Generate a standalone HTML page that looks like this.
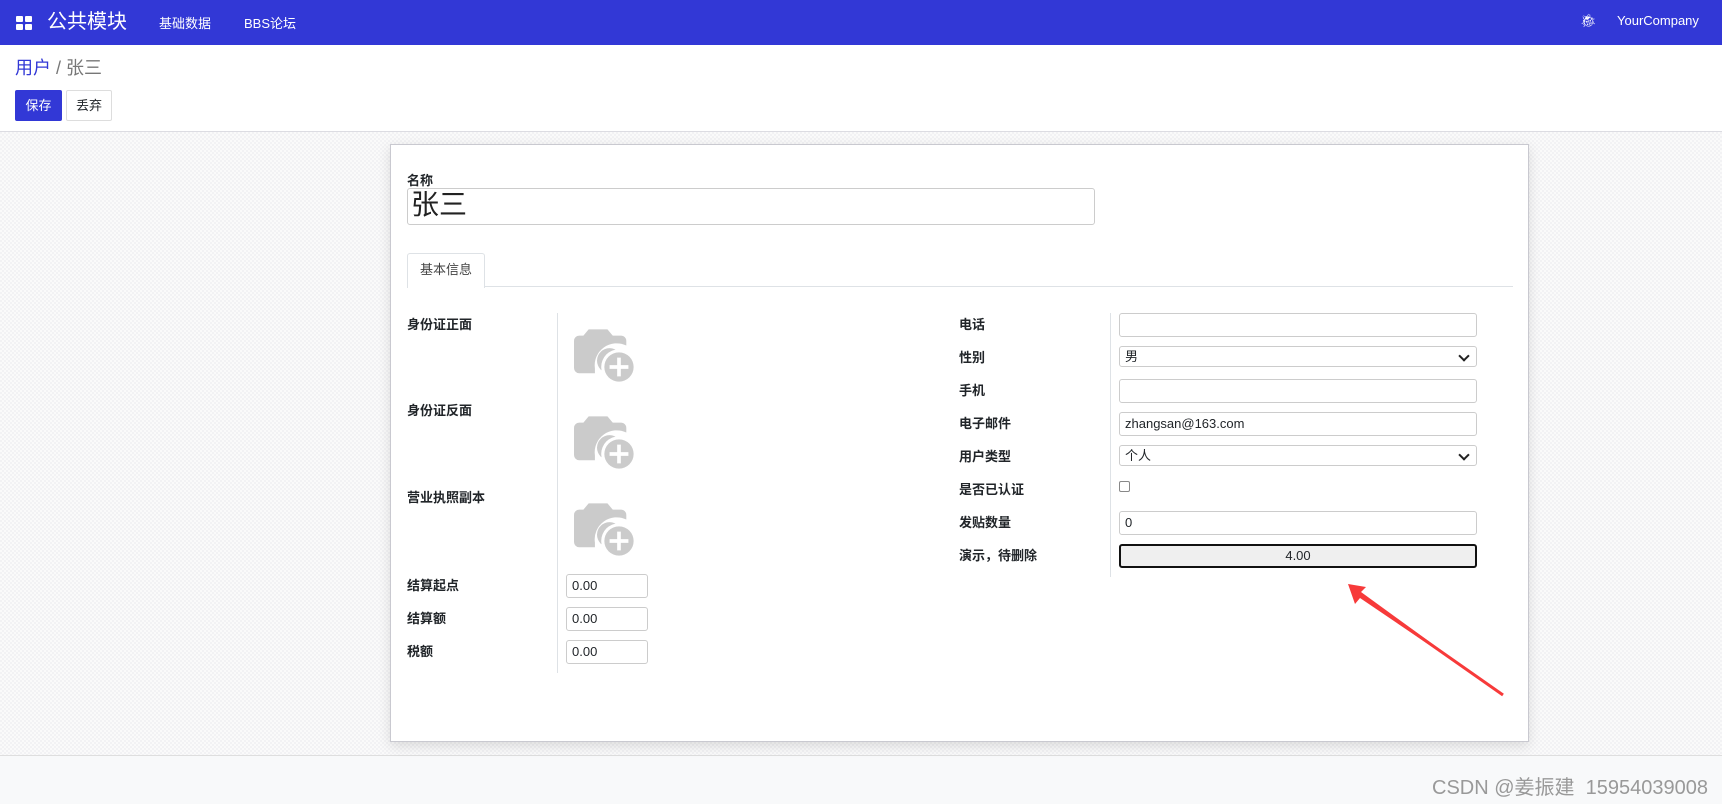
<!DOCTYPE html>
<html><head><meta charset="utf-8"><style>
*{box-sizing:border-box;margin:0;padding:0}
body{width:1722px;height:804px;overflow:hidden;position:relative;background:#fff;font-family:"Liberation Sans","Noto Sans CJK SC",sans-serif;font-size:13px;color:#212529}
.nav{position:absolute;left:0;top:0;width:1722px;height:45px;background:#3238d6;color:#fff}
.a{position:absolute}
.main{position:absolute;left:0;top:131px;width:1722px;height:624px;border-top:1px solid #dcdce2;background-color:#f2f2f4;background-image:linear-gradient(45deg,#fafafa 25%,transparent 25%,transparent 75%,#fafafa 75%),linear-gradient(45deg,#fafafa 25%,transparent 25%,transparent 75%,#fafafa 75%);background-size:4px 4px;background-position:0 0,2px 2px}
.foot{position:absolute;left:0;top:755px;width:1722px;height:49px;background:#f8f9fa;border-top:1px solid #dedede}
.sheet{position:absolute;left:390px;top:144px;width:1139px;height:598px;background:#fff;border:1px solid #c9c9d0;box-shadow:0 4px 12px rgba(0,0,0,.12)}
.lbl{position:absolute;font-weight:bold;font-size:13px;color:#212529}
.in{position:absolute;height:24px;border:1px solid #ccc;border-radius:3px;background:#fff;font-size:13px;padding:3px 5px;line-height:16px}
.sel::after{content:"";position:absolute;right:8px;top:5px;width:6px;height:6px;border-right:2px solid #222;border-bottom:2px solid #222;transform:rotate(45deg)}
</style></head><body>
<div class="nav">
 <div class="a" style="left:16px;top:16px;width:7px;height:6px;background:#fff;border-radius:1px"></div>
 <div class="a" style="left:25px;top:16px;width:7px;height:6px;background:#fff;border-radius:1px"></div>
 <div class="a" style="left:16px;top:24px;width:7px;height:6px;background:#fff;border-radius:1px"></div>
 <div class="a" style="left:25px;top:24px;width:7px;height:6px;background:#fff;border-radius:1px"></div>
 <div class="a" style="left:47px;top:9px;font-size:20px;line-height:26px">公共模块</div>
 <div class="a" style="left:159px;top:13px;font-size:13px">基础数据</div>
 <div class="a" style="left:244px;top:13px;font-size:13px">BBS论坛</div>
 <div class="a" style="left:1580px;top:13px;font-size:13px">🐞︎</div>
 <div class="a" style="left:1617px;top:13px;font-size:13px">YourCompany</div>
</div>
<div class="a" style="left:15px;top:54px;font-size:18px;color:#3238d6">用户 <span style="color:#777">/ 张三</span></div>
<div class="a" style="left:15px;top:90px;width:47px;height:31px;background:#3238d6;color:#fff;border-radius:2px;text-align:center;line-height:31px">保存</div>
<div class="a" style="left:66px;top:90px;width:46px;height:31px;border:1px solid #ddd;border-radius:2px;text-align:center;line-height:29px">丢弃</div>
<div class="main"></div>
<div class="foot"></div>
<div class="a" style="left:1432px;top:771px;font-size:20px;color:#999">CSDN @姜振建&nbsp; 15954039008</div>
<div class="sheet"></div>
<div class="lbl" style="left:407px;top:170px">名称</div>
<div class="in" style="left:407px;top:188px;width:688px;height:37px;font-size:28px;line-height:28px;padding:2px 3px;color:#222">张三</div>
<div class="a" style="left:407px;top:253px;width:78px;height:35px;border:1px solid #dee2e6;border-bottom:none;background:#fff;border-radius:3px 3px 0 0;text-align:center;line-height:32px;color:#444">基本信息</div>
<div class="a" style="left:485px;top:286px;width:1028px;height:1px;background:#dee2e6"></div>
<div class="a" style="left:557px;top:313px;width:1px;height:360px;background:#dee2e6"></div>
<div class="a" style="left:1110px;top:313px;width:1px;height:264px;background:#dee2e6"></div>
<div class="lbl" style="left:407px;top:314px">身份证正面</div>
<div class="lbl" style="left:407px;top:400px">身份证反面</div>
<div class="lbl" style="left:407px;top:487px">营业执照副本</div>
<svg class="a" style="left:574px;top:325px" width="68" height="61" viewBox="0 0 65 56"><path d="M14 3h18l5 6h8a5 5 0 0 1 5 5v4.5a21 21 0 0 0-30 22V45H5a5 5 0 0 1-5-5V14a5 5 0 0 1 5-5h4z" fill="#cbcbcb"/><circle cx="34" cy="33" r="12" fill="#cbcbcb"/><circle cx="43" cy="39" r="17" fill="#fff"/><circle cx="43" cy="39" r="14" fill="#cbcbcb"/><path d="M43 30v18M34 39h18" stroke="#fff" stroke-width="3.5"/></svg>
<svg class="a" style="left:574px;top:412px" width="68" height="61" viewBox="0 0 65 56"><path d="M14 3h18l5 6h8a5 5 0 0 1 5 5v4.5a21 21 0 0 0-30 22V45H5a5 5 0 0 1-5-5V14a5 5 0 0 1 5-5h4z" fill="#cbcbcb"/><circle cx="34" cy="33" r="12" fill="#cbcbcb"/><circle cx="43" cy="39" r="17" fill="#fff"/><circle cx="43" cy="39" r="14" fill="#cbcbcb"/><path d="M43 30v18M34 39h18" stroke="#fff" stroke-width="3.5"/></svg>
<svg class="a" style="left:574px;top:499px" width="68" height="61" viewBox="0 0 65 56"><path d="M14 3h18l5 6h8a5 5 0 0 1 5 5v4.5a21 21 0 0 0-30 22V45H5a5 5 0 0 1-5-5V14a5 5 0 0 1 5-5h4z" fill="#cbcbcb"/><circle cx="34" cy="33" r="12" fill="#cbcbcb"/><circle cx="43" cy="39" r="17" fill="#fff"/><circle cx="43" cy="39" r="14" fill="#cbcbcb"/><path d="M43 30v18M34 39h18" stroke="#fff" stroke-width="3.5"/></svg>
<div class="lbl" style="left:407px;top:575px">结算起点</div>
<div class="lbl" style="left:407px;top:608px">结算额</div>
<div class="lbl" style="left:407px;top:641px">税额</div>
<div class="in" style="left:566px;top:574px;width:82px">0.00</div>
<div class="in" style="left:566px;top:607px;width:82px">0.00</div>
<div class="in" style="left:566px;top:640px;width:82px">0.00</div>
<div class="lbl" style="left:959px;top:314px">电话</div>
<div class="lbl" style="left:959px;top:347px">性别</div>
<div class="lbl" style="left:959px;top:380px">手机</div>
<div class="lbl" style="left:959px;top:413px">电子邮件</div>
<div class="lbl" style="left:959px;top:446px">用户类型</div>
<div class="lbl" style="left:959px;top:479px">是否已认证</div>
<div class="lbl" style="left:959px;top:512px">发贴数量</div>
<div class="lbl" style="left:959px;top:545px">演示，待删除</div>
<div class="in" style="left:1119px;top:313px;width:358px"></div>
<div class="in sel" style="left:1119px;top:346px;width:358px;height:21px;padding-top:2px">男</div>
<div class="in" style="left:1119px;top:379px;width:358px"></div>
<div class="in" style="left:1119px;top:412px;width:358px">zhangsan@163.com</div>
<div class="in sel" style="left:1119px;top:445px;width:358px;height:21px;padding-top:2px">个人</div>
<div class="in" style="left:1119px;top:481px;width:11px;height:11px;border:1px solid #888;border-radius:2px;padding:0"></div>
<div class="in" style="left:1119px;top:511px;width:358px">0</div>
<div class="in" style="left:1119px;top:544px;width:358px;border:2px solid #111;background:#efefef;text-align:center;padding-top:2px">4.00</div>
<svg class="a" style="left:0;top:0" width="1722" height="804"><path d="M1348 584l18 3-5 5 142 103-143-97-5 6z" fill="#f73a3a"/><path d="M1356 592L1503 695" stroke="#f73a3a" stroke-width="3"/></svg>
</body></html>
